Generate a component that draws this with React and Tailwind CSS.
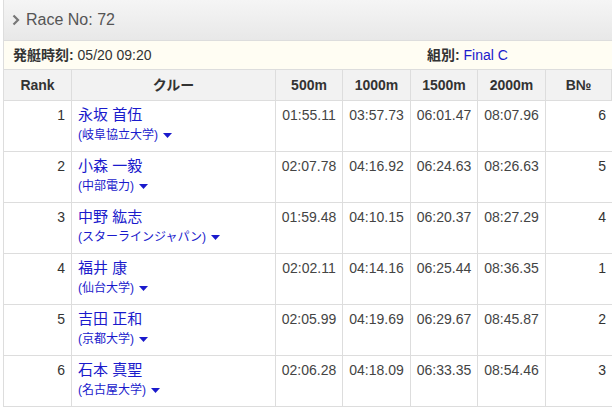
const rows=[
["1","永坂 首伍","(岐阜協立大学)","01:55.11","03:57.73","06:01.47","08:07.96","6"],
["2","小森 一毅","(中部電力)","02:07.78","04:16.92","06:24.63","08:26.63","5"],
["3","中野 紘志","(スターラインジャパン)","01:59.48","04:10.15","06:20.37","08:27.29","4"],
["4","福井 康","(仙台大学)","02:02.11","04:14.16","06:25.44","08:36.35","1"],
["5","吉田 正和","(京都大学)","02:05.99","04:19.69","06:29.67","08:45.87","2"],
["6","石本 真聖","(名古屋大学)","02:06.28","04:18.09","06:33.35","08:54.46","3"],
];
const W=["w-[68px]","w-[204px]","w-[67px]","w-[68px]","w-[67px]","w-[68px]","flex-1"];
export default function App(){
return <div className="w-[612px] h-[407px] overflow-hidden bg-white pl-[3px] text-[14px] text-[#333]" style={{fontFamily:'"Liberation Sans","Noto Sans CJK JP",sans-serif'}}>
<div className="border-l border-[#ddd]">
<div className="h-[41px] flex items-center gap-[6px] px-2 bg-gradient-to-b from-[#f5f5f5] to-[#e8e8e8] border-b border-[#ddd] text-[16px] text-[#555]">
<svg width="8" height="12" viewBox="0 0 8 12"><path d="M1.5 1.5l4.5 4.5-4.5 4.5" stroke="#777" strokeWidth="2.2" fill="none"/></svg>Race No: 72</div>
<div className="h-[29px] flex items-center bg-[#fffdf3] px-[9px] border-b border-[#ddd]">
<div className="w-[414px]"><b>発艇時刻:</b> 05/20 09:20</div>
<div><b>組別:</b> <span className="text-[#1a1acc]">Final C</span></div></div>
<div className="flex h-[31px] bg-[#f2f2f2] font-bold border-b border-[#ddd]">
{["Rank","クルー","500m","1000m","1500m","2000m","B№"].map((h,i)=><div key={i} className={`${W[i]} flex items-center justify-center border-r border-[#ddd]`}>{h}</div>)}
</div>
{rows.map(r=><div key={r[0]} className="flex h-[51px] border-b border-[#ddd]">
<div className={`${W[0]} border-r border-[#ddd] text-right pr-[6px] pt-[4px]`}>{r[0]}</div>
<div className={`${W[1]} border-r border-[#ddd] pl-[6px] pt-[4px] text-[#1a1acc]`}>
<div className="text-[15px] leading-[19px]">{r[1]}</div>
<div className="text-[12px] mt-[2px] flex items-center gap-[5px]">{r[2]}<svg width="9" height="5" viewBox="0 0 9 5"><path d="M0 0h9L4.5 5z" fill="#1a1acc"/></svg></div></div>
{r.slice(3,7).map((v,i)=><div key={i} className={`${W[i+2]} border-r border-[#ddd] text-center pt-[4px] text-[#444]`}>{v}</div>)}
<div className="flex-1 text-right pr-[6px] pt-[4px]">{r[7]}</div>
</div>)}
</div></div>}
